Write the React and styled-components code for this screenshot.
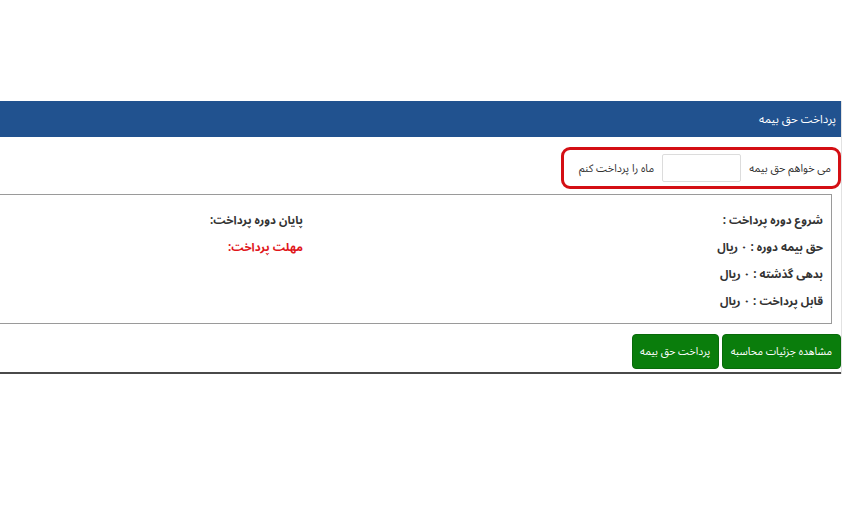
import React from "react";
import styled, { createGlobalStyle } from "styled-components";

const FONT = `"Noto Sans Arabic", "Noto Naskh Arabic", "DejaVu Sans", sans-serif`;

const Global = createGlobalStyle`
  html, body { margin: 0; padding: 0; background: #fff; }
  body { font-family: ${FONT}; }
`;

const Page = styled.div`
  width: 853px;
  height: 514px;
  padding-top: 101px;
  box-sizing: border-box;
  overflow: hidden;
`;

const Panel = styled.div`
  width: 842px;
  direction: rtl;
  border-right: 1px solid #e2e2e2;
  box-sizing: border-box;
`;

const Header = styled.div`
  height: 36px;
  background: #21528f;
  color: #fff;
  font-size: 11.5px;
  line-height: 36px;
  padding-right: 5px;
`;

const FormRow = styled.div`
  display: flex;
  padding-top: 10px;
`;

const Highlight = styled.div`
  width: 280px;
  height: 42px;
  box-sizing: border-box;
  border: 3.5px solid #d40f14;
  border-radius: 9px;
  display: flex;
  align-items: center;
  gap: 8px;
  padding-right: 7px;
  font-size: 10.8px;
  color: #333;
`;

const Amount = styled.input`
  width: 79px;
  height: 28px;
  box-sizing: border-box;
  border: 1px solid #dcdcdc;
  border-radius: 2px;
  background: #fff;
  outline: none;
`;

const InfoBox = styled.div`
  margin-top: 5px;
  margin-right: 9px;
  height: 130px;
  box-sizing: border-box;
  border: 1.5px solid #9a9a9a;
  border-left: none;
  display: flex;
  padding: 12px 8px 0 0;
`;

const Column = styled.div`
  width: ${(p) => p.$width || "auto"};
  display: flex;
  flex-direction: column;
`;

const Line = styled.div`
  height: 27px;
  line-height: 27px;
  font-size: 11.5px;
  font-weight: bold;
  color: ${(p) => (p.$alert ? "#e0161b" : "#333")};
  white-space: nowrap;
`;

const Actions = styled.div`
  display: flex;
  gap: 3px;
  padding-top: 10px;
  padding-bottom: 3px;
  border-bottom: 2px solid #4a4a4a;
`;

const GreenButton = styled.button`
  height: 35px;
  padding: 0 ${(p) => p.$pad || 10}px;
  background: #0a7d0c;
  border: 1px solid #086a0a;
  border-radius: 4px;
  color: #fff;
  font-family: ${FONT};
  font-size: 10.5px;
  cursor: pointer;
`;

export default function App() {
  return (
    <>
      <Global />
      <Page>
        <Panel>
          <Header>پرداخت حق بیمه</Header>
          <FormRow>
            <Highlight>
              <span>می خواهم حق بیمه</span>
              <Amount type="text" />
              <span>ماه را پرداخت کنم</span>
            </Highlight>
          </FormRow>
          <InfoBox>
            <Column $width="520px">
              <Line>شروع دوره پرداخت :</Line>
              <Line>حق بیمه دوره : ۰ ریال</Line>
              <Line>بدهی گذشته : ۰ ریال</Line>
              <Line>قابل پرداخت : ۰ ریال</Line>
            </Column>
            <Column>
              <Line>پایان دوره پرداخت:</Line>
              <Line $alert>مهلت پرداخت:</Line>
            </Column>
          </InfoBox>
          <Actions>
            <GreenButton $pad={8}>مشاهده جزئیات محاسبه</GreenButton>
            <GreenButton $pad={7.5}>پرداخت حق بیمه</GreenButton>
          </Actions>
        </Panel>
      </Page>
    </>
  );
}
